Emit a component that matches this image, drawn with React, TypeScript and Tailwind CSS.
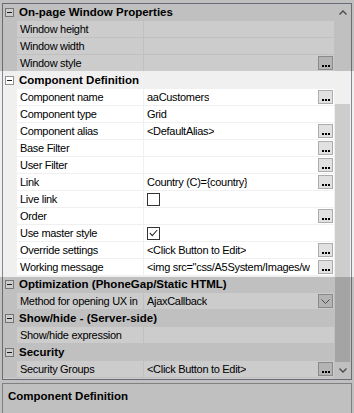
import React from "react";

type Row =
  | { kind: "cat"; label: string }
  | {
      kind: "prop";
      label: string;
      value?: string;
      btn?: "dots" | "drop";
      check?: boolean;
    };

const ROWS: Row[] = [
  { kind: "cat", label: "On-page Window Properties" },
  { kind: "prop", label: "Window height" },
  { kind: "prop", label: "Window width" },
  { kind: "prop", label: "Window style", btn: "dots" },
  { kind: "cat", label: "Component Definition" },
  { kind: "prop", label: "Component name", value: "aaCustomers", btn: "dots" },
  { kind: "prop", label: "Component type", value: "Grid" },
  { kind: "prop", label: "Component alias", value: "<DefaultAlias>", btn: "dots" },
  { kind: "prop", label: "Base Filter", btn: "dots" },
  { kind: "prop", label: "User Filter", btn: "dots" },
  { kind: "prop", label: "Link", value: "Country (C)={country}", btn: "dots" },
  { kind: "prop", label: "Live link", check: false },
  { kind: "prop", label: "Order", btn: "dots" },
  { kind: "prop", label: "Use master style", check: true },
  { kind: "prop", label: "Override settings", value: "<Click Button to Edit>", btn: "dots" },
  { kind: "prop", label: "Working message", value: '<img src="css/A5System/Images/w', btn: "dots" },
  { kind: "cat", label: "Optimization (PhoneGap/Static HTML)" },
  { kind: "prop", label: "Method for opening UX in", value: "AjaxCallback", btn: "drop" },
  { kind: "cat", label: "Show/hide - (Server-side)" },
  { kind: "prop", label: "Show/hide expression" },
  { kind: "cat", label: "Security" },
  { kind: "prop", label: "Security Groups", value: "<Click Button to Edit>", btn: "dots" },
];

function DotsButton() {
  return (
    <span className="ml-auto mr-[1px] flex h-[14px] w-[15px] shrink-0 items-end justify-center gap-[1px] border border-[#adadad] bg-[#e1e1e1] pb-[2px]">
      <span className="h-[2px] w-[2px] bg-black" />
      <span className="h-[2px] w-[2px] bg-black" />
      <span className="h-[2px] w-[2px] bg-black" />
    </span>
  );
}

function DropButton() {
  return (
    <span className="ml-auto mr-[1px] flex h-[14px] w-[15px] shrink-0 items-center justify-center border border-[#adadad] bg-[#e1e1e1]">
      <svg width="9" height="5" viewBox="0 0 9 5" fill="none">
        <path d="M0.5 0.5 L4.5 4.5 L8.5 0.5" stroke="#606060" strokeWidth="1" />
      </svg>
    </span>
  );
}

function Check({ checked }: { checked: boolean }) {
  return (
    <span className="flex h-[13px] w-[13px] shrink-0 items-center justify-center border border-[#333333] bg-white">
      {checked && (
        <svg width="9" height="8" viewBox="0 0 9 8" fill="none">
          <path d="M0.8 4 L3.3 6.6 L8.2 1" stroke="#333333" strokeWidth="1.1" />
        </svg>
      )}
    </span>
  );
}

function CategoryRow({ label }: { label: string }) {
  return (
    <div className="flex h-[17px] items-center bg-[#f0f0f0]">
      <span className="ml-[2px] flex h-[9px] w-[9px] shrink-0 items-center justify-center border border-[#919191] bg-white">
        <span className="h-[1px] w-[5px] bg-[#222]" />
      </span>
      <span className="ml-[5px] whitespace-nowrap text-[11.5px] font-bold text-black">{label}</span>
    </div>
  );
}

function PropRow({ row }: { row: Extract<Row, { kind: "prop" }> }) {
  return (
    <div className="flex h-[17px] tracking-[-0.3px]">
      <div className="w-[14px] shrink-0 bg-[#f0f0f0]" />
      <div className="flex w-[127px] shrink-0 items-center overflow-hidden whitespace-nowrap border-b border-r border-[#f0f0f0] bg-white pl-[3px]">
        {row.label}
      </div>
      <div className="flex min-w-0 flex-1 items-center border-b border-[#f0f0f0] bg-white pl-[3px]">
        {row.check !== undefined ? (
          <Check checked={row.check} />
        ) : (
          <span className="min-w-0 overflow-hidden whitespace-nowrap">{row.value}</span>
        )}
        {row.btn === "dots" && <DotsButton />}
        {row.btn === "drop" && <DropButton />}
      </div>
    </div>
  );
}

function ScrollBar() {
  return (
    <div className="flex w-[17px] shrink-0 flex-col bg-[#f0f0f0]">
      <div className="flex h-[17px] items-center justify-center">
        <svg width="8" height="5" viewBox="0 0 8 5" fill="none">
          <path d="M0.5 4.5 L4 1 L7.5 4.5" stroke="#606060" strokeWidth="1.4" />
        </svg>
      </div>
      <div className="h-[83px]" />
      <div className="mx-[1px] h-[258px] bg-[#cdcdcd]" />
      <div className="flex flex-1 items-center justify-center">
        <svg width="8" height="5" viewBox="0 0 8 5" fill="none">
          <path d="M0.5 0.5 L4 4 L7.5 0.5" stroke="#606060" strokeWidth="1.4" />
        </svg>
      </div>
    </div>
  );
}

export default function App() {
  return (
    <div className="relative h-[413px] w-[354px] overflow-hidden bg-[#f0f0f0] font-['Liberation_Sans',Arial,sans-serif] text-[11px] text-black">
      <div className="ml-[2px] mt-[3px] flex h-[377px] w-[350px] border border-[#828790] bg-white">
        <div className="flex min-w-0 flex-1 flex-col">
          {ROWS.map((row, i) =>
            row.kind === "cat" ? (
              <CategoryRow key={i} label={row.label} />
            ) : (
              <PropRow key={i} row={row} />
            )
          )}
        </div>
        <ScrollBar />
      </div>
      <div className="ml-[2px] mt-[3px] h-[40px] w-[350px] border border-[#a0a0a0] bg-[#f0f0f0] px-[5px] pt-[4px]">
        <p className="text-[11.5px] font-bold">Component Definition</p>
      </div>
      <div className="pointer-events-none absolute left-0 top-[71px] h-[206px] w-[354px] shadow-[0_0_0_999px_rgba(0,0,0,0.2)]" />
    </div>
  );
}
